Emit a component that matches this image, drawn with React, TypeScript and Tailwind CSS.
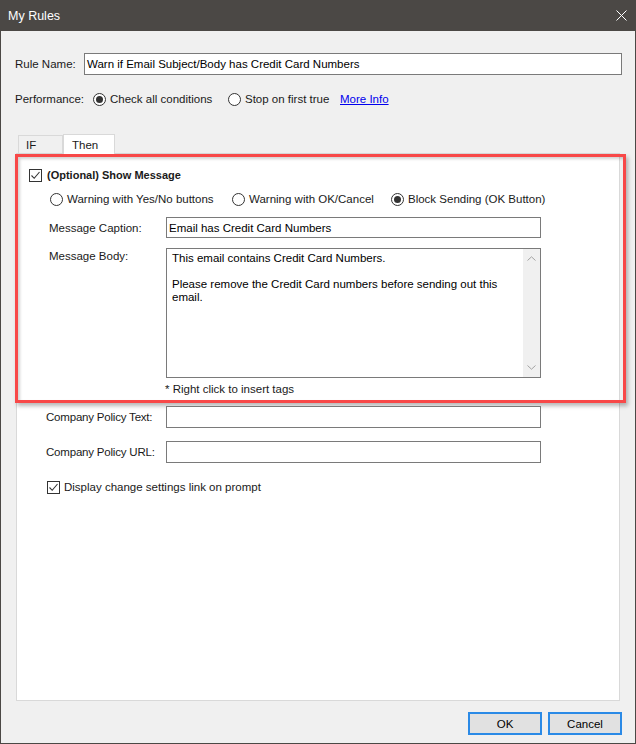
const font = "font-['Segoe_UI','Liberation_Sans',Arial,sans-serif]";

export default function App() {
  return (
    <div
      className={`flex h-[744px] w-[636px] flex-col overflow-hidden border-x border-b border-[#4b4845] bg-[#f0f0f0] text-[11.5px] leading-[14px] text-[#1a1a1a] ${font}`}
    >
      <TitleBar />

      <div className="mt-[22px] flex items-center pl-[14px] pr-[13px]">
        <span className="w-[69px]">Rule Name:</span>
        <div className="flex h-[22px] flex-1 items-center border border-[#7a7a7a] bg-white px-[2px] text-black">
          Warn if Email Subject/Body has Credit Card Numbers
        </div>
      </div>

      <div className="mt-[16px] flex h-[16px] items-center pl-[14px]">
        <span className="w-[78px]">Performance:</span>
        <Radio checked label="Check all conditions" className="w-[135px]" />
        <Radio label="Stop on first true" className="w-[112px]" />
        <span className="text-[#0000ee] underline">More Info</span>
      </div>

      <div className="mx-[15px] mt-[27px] flex items-end pl-[2px]">
        <div className="flex h-[18px] w-[45px] items-end border-x border-t border-[#d9d9d9] bg-[#f0f0f0] pb-[1px] pl-[7px]">
          IF
        </div>
        <div className="relative z-10 -mb-px flex h-[20px] w-[52px] items-start border-x border-t border-[#d9d9d9] bg-white pl-[8px] pt-[3px]">
          Then
        </div>
      </div>

      <div className="mx-[15px] flex h-[548px] flex-col border border-[#d9d9d9] bg-white">
        <MessageSection />

        <div className="mt-[3px] flex items-center pl-[29px] text-[11.5px] tracking-[-0.2px]">
          <span className="w-[120px]">Company Policy Text:</span>
          <Field />
        </div>
        <div className="mt-[13px] flex items-center pl-[29px] text-[11.5px] tracking-[-0.2px]">
          <span className="w-[120px]">Company Policy URL:</span>
          <Field />
        </div>
        <div className="mt-[17px] flex items-center pl-[30px]">
          <Checkbox />
          <span className="ml-[4px]">Display change settings link on prompt</span>
        </div>
      </div>

      <div className="mt-[11px] flex justify-end gap-[6px] pr-[13px]">
        <Button label="OK" />
        <Button label="Cancel" />
      </div>
    </div>
  );
}

function TitleBar() {
  return (
    <div className="flex h-[31px] shrink-0 items-center justify-between bg-[#4b4845] pl-[7px] pr-[8px] text-[12.5px] text-white">
      <span>My Rules</span>
      <svg width="11" height="11" viewBox="0 0 11 11" aria-hidden="true">
        <path d="M0.5 0.5 L10.5 10.5 M10.5 0.5 L0.5 10.5" stroke="#fff" strokeWidth="1" fill="none" />
      </svg>
    </div>
  );
}

function MessageSection() {
  return (
    <div className="-ml-[2px] h-[249px] w-[611px] shrink-0 border-[3px] border-[#f84848] shadow-[2px_3px_4px_rgba(0,0,0,0.28),inset_2px_2px_3px_rgba(0,0,0,0.18)]">
      <div className="mt-[11px] flex items-center pl-[11px]">
        <Checkbox />
        <span className="ml-[5px] text-[11px] font-bold">(Optional) Show Message</span>
      </div>

      <div className="mt-[10px] flex items-center pl-[32px]">
        <Radio label="Warning with Yes/No buttons" className="w-[182px]" />
        <Radio label="Warning with OK/Cancel" className="w-[159px]" />
        <Radio checked label="Block Sending (OK Button)" />
      </div>

      <div className="mt-[11px] flex items-center pl-[31px]">
        <span className="w-[117px]">Message Caption:</span>
        <div className="flex h-[21px] w-[375px] items-center border border-[#7a7a7a] bg-white px-[2px] text-black">
          Email has Credit Card Numbers
        </div>
      </div>

      <div className="mt-[10px] flex items-start pl-[31px]">
        <span className="w-[117px] pt-[1px]">Message Body:</span>
        <div className="flex h-[130px] w-[375px] border border-[#7a7a7a] bg-white">
          <div className="flex-1 pl-[5px] pt-[3px] leading-[13px] text-black">
            <p>This email contains Credit Card Numbers.</p>
            <p className="mt-[13px]">Please remove the Credit Card numbers before sending out this email.</p>
          </div>
          <div className="flex w-[17px] flex-col items-center justify-between bg-[#f0f0f0] py-[7px]">
            <svg width="9" height="5" viewBox="0 0 9 5" aria-hidden="true">
              <path d="M0.5 4.5 L4.5 0.8 L8.5 4.5" fill="none" stroke="#a3a3a3" strokeWidth="1" />
            </svg>
            <svg width="9" height="5" viewBox="0 0 9 5" aria-hidden="true">
              <path d="M0.5 0.5 L4.5 4.2 L8.5 0.5" fill="none" stroke="#a3a3a3" strokeWidth="1" />
            </svg>
          </div>
        </div>
      </div>

      <p className="mt-[4px] pl-[147px]">* Right click to insert tags</p>
    </div>
  );
}

function Field() {
  return <div className="h-[22px] w-[375px] border border-[#7a7a7a] bg-white" />;
}

function Radio({ label, checked = false, className = "" }: { label: string; checked?: boolean; className?: string }) {
  return (
    <span className={`flex items-center ${className}`}>
      <span className="grid h-[13px] w-[13px] shrink-0 place-items-center rounded-full border border-[#333] bg-white">
        {checked ? <span className="h-[7px] w-[7px] rounded-full bg-[#333]" /> : null}
      </span>
      <span className="ml-[4px] whitespace-nowrap">{label}</span>
    </span>
  );
}

function Checkbox() {
  return (
    <span className="grid h-[13px] w-[13px] shrink-0 place-items-center border border-[#333] bg-white">
      <svg width="11" height="11" viewBox="0 0 11 11" aria-hidden="true">
        <path d="M1.5 5.5 L4.2 8.3 L9.5 2" fill="none" stroke="#333" strokeWidth="1.1" />
      </svg>
    </span>
  );
}

function Button({ label }: { label: string }) {
  return (
    <button
      type="button"
      className="h-[23px] w-[74px] border-2 border-[#2b8ae6] bg-[#e1e1e1] text-[11.5px] text-black"
    >
      {label}
    </button>
  );
}
